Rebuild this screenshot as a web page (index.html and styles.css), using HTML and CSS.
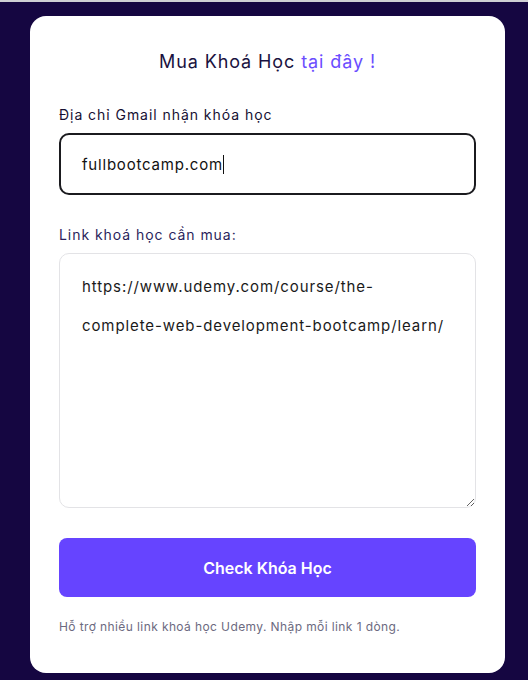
FILE: index.html
```html
<!DOCTYPE html>
<html lang="vi">
<head>
<meta charset="utf-8">
<title>Mua Khoá Học</title>
<link rel="stylesheet" href="styles.css">
</head>
<body>
<div class="page">
  <div class="card">
    <h1 class="title">Mua Khoá Học <span class="accent">tại đây !</span></h1>
    <div class="field">
      <label class="label">Địa chỉ Gmail nhận khóa học</label>
      <div class="input"><span class="value">fullbootcamp.com</span><span class="caret"></span></div>
    </div>
    <div class="field">
      <label class="label label-alt">Link khoá học cần mua:</label>
      <textarea class="textarea" readonly>https://www.udemy.com/course/the-complete-web-development-bootcamp/learn/</textarea>
    </div>
    <button class="btn">Check Khóa Học</button>
    <p class="hint">Hỗ trợ nhiều link khoá học Udemy. Nhập mỗi link 1 dòng.</p>
  </div>
</div>
</body>
</html>
```
FILE: styles.css
```css
html, body {
  margin: 0;
  padding: 0;
}
body {
  background: #150641;
  font-family: Inter, "Noto Sans", sans-serif;
  border-top: 2px solid #cfcfd4;
  height: 678px;
  overflow: hidden;
}
.page {
  padding: 14px 0 0 30px;
}
.card {
  width: 475px;
  box-sizing: border-box;
  height: 657px;
  background: #ffffff;
  border-radius: 16px;
  padding: 34px 29px 0;
  display: flex;
  flex-direction: column;
}
.title {
  margin: 0;
  font-size: 18px;
  line-height: 24px;
  font-weight: 400;
  letter-spacing: 0.9px;
  text-align: center;
  color: #1a1240;
}
.accent {
  color: #6b4dff;
}
.field {
  display: flex;
  flex-direction: column;
  gap: 8px;
  margin-top: 31px;
}
.field + .field {
  margin-top: 30px;
}
.label {
  font-size: 14px;
  line-height: 20px;
  letter-spacing: 0.95px;
  color: #161033;
}
.label-alt {
  color: #2b1f5c;
}
.input {
  height: 62px;
  box-sizing: border-box;
  border: 2px solid #1b1b1f;
  border-radius: 10px;
  padding: 0 21px;
  display: flex;
  align-items: center;
  font-size: 15px;
  letter-spacing: 0.8px;
  color: #111111;
}
.caret {
  display: inline-block;
  width: 1px;
  height: 19px;
  background: #111;
  margin-left: 0;
}
.textarea {
  height: 255px;
  box-sizing: border-box;
  border: 1px solid #e3e3e6;
  border-radius: 10px;
  padding: 13px 22px;
  font-family: Inter, "Noto Sans", sans-serif;
  font-size: 15px;
  line-height: 39px;
  letter-spacing: 0.9px;
  color: #1a1a1a;
  resize: vertical;
  outline: none;
  margin: 0;
}
.btn {
  margin-top: 30px;
  height: 59px;
  border: none;
  border-radius: 8px;
  background: #6644ff;
  color: #ffffff;
  font-family: Inter, "Noto Sans", sans-serif;
  font-size: 16px;
  font-weight: 600;
  cursor: pointer;
}
.hint {
  margin: 22px 0 0;
  font-size: 12px;
  line-height: 16px;
  letter-spacing: 0.4px;
  color: #6c6a80;
}
```
